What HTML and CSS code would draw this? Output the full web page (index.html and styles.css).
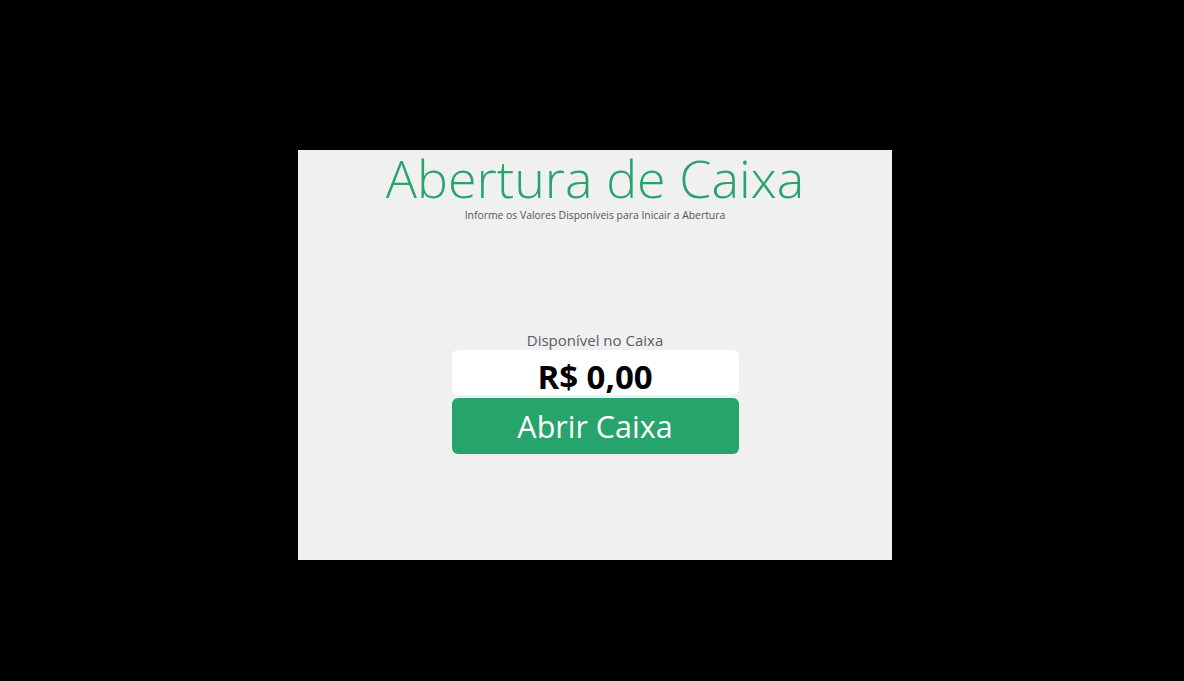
FILE: index.html
```html
<!DOCTYPE html>
<html lang="pt-BR">
<head>
<meta charset="utf-8">
<title>Abertura de Caixa</title>
<link rel="stylesheet" href="styles.css">
</head>
<body>
<main class="panel">
  <header class="head">
    <h1 class="title">Abertura de Caixa</h1>
    <p class="subtitle">Informe os Valores Disponíveis para Inicair a Abertura</p>
  </header>
  <section class="form">
    <label class="label" for="valor">Disponível no Caixa</label>
    <div class="amount" id="valor">R$ 0,00</div>
    <button class="btn" type="button">Abrir Caixa</button>
  </section>
</main>
</body>
</html>
```
FILE: styles.css
```css
html, body {
  margin: 0;
  padding: 0;
  background: #000;
  height: 100%;
}
body {
  padding: 150px 0 0 298px;
  box-sizing: border-box;
}
.panel {
  width: 594px;
  height: 410px;
  background: #f0f0f0;
  display: flex;
  flex-direction: column;
  align-items: center;
  font-family: "Open Sans", "Noto Sans", sans-serif;
}
.head {
  display: flex;
  flex-direction: column;
  align-items: center;
}
.title {
  margin: 0;
  font-weight: 300;
  font-size: 52px;
  line-height: 56px;
  color: #27a46d;
}
.subtitle {
  margin: 2px 0 0;
  font-size: 10.4px;
  line-height: 14px;
  color: #555;
}
.form {
  margin-top: 108px;
  display: flex;
  flex-direction: column;
  align-items: center;
  width: 287px;
}
.label {
  font-size: 15px;
  line-height: 20px;
  color: #5b5b66;
}
.amount {
  width: 100%;
  height: 45px;
  background: #fff;
  border-radius: 6px;
  display: flex;
  align-items: center;
  justify-content: center;
  font-size: 33px;
  font-weight: 700;
  color: #000;
  box-sizing: border-box;
  padding-top: 7px;
}
.btn {
  margin-top: 3px;
  width: 100%;
  height: 56px;
  border: none;
  border-radius: 6px;
  background: #27a36c;
  color: #fff;
  font-family: inherit;
  font-size: 30.5px;
  font-weight: 400;
  padding: 0;
}
```
